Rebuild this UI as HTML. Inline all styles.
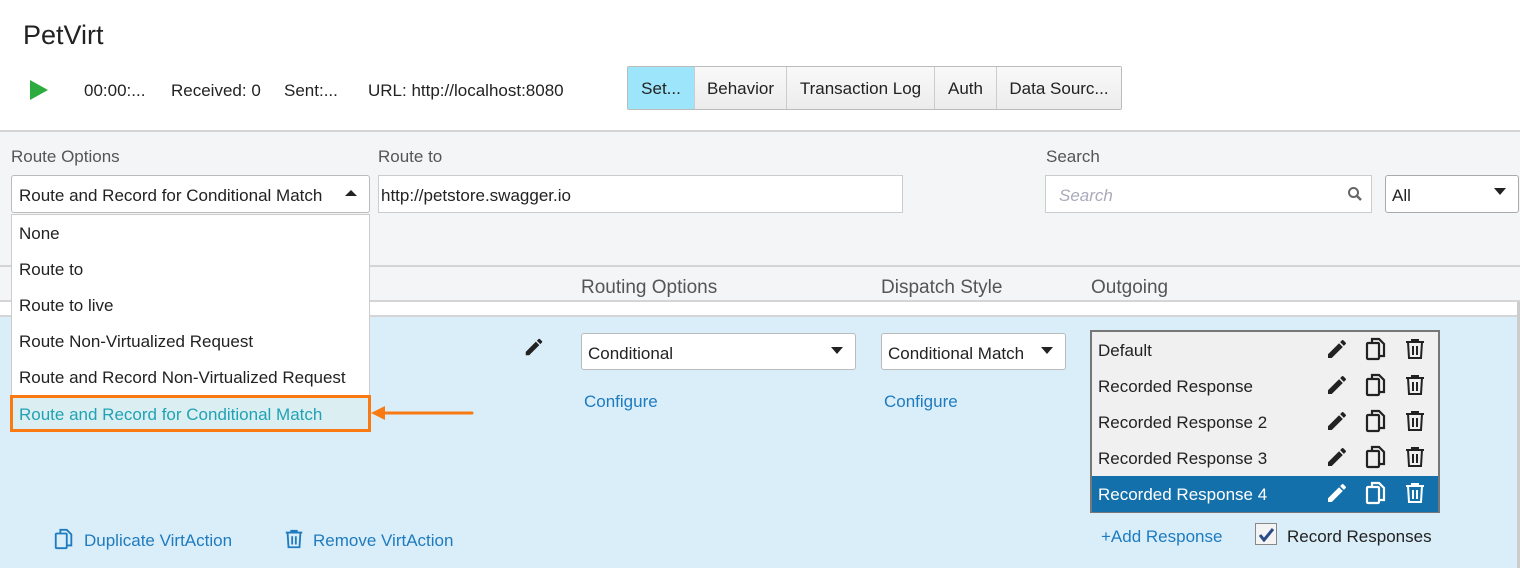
<!DOCTYPE html>
<html><head><meta charset="utf-8"><style>
*{box-sizing:border-box;margin:0;padding:0}
body{width:1520px;height:568px;overflow:hidden;background:#fff;font-family:"Liberation Sans",sans-serif;color:#222;position:relative;font-size:17px}
.a{position:absolute;white-space:nowrap}
.lbl{color:#555;font-size:17px}
.box{position:absolute;background:#fff;border:1px solid #ccc}
.tab{position:absolute;top:67px;height:42px;border-right:1px solid #ccc;line-height:44px;text-align:center;font-size:17px;background:linear-gradient(#f9f9f9,#ececec)}
.dd div{height:36px;line-height:38px;padding-left:7px}
.link{color:#1e7bbf}
.row{position:absolute;left:1092px;width:346px;height:36px;line-height:38px;padding-left:6px}
</style></head><body>
<div class="a" style="left:23px;top:20px;font-size:27px;color:#222">PetVirt</div>
<svg class="a" style="left:29px;top:79px" width="20" height="22"><polygon points="1,1 19,11 1,21" fill="#2eab3f"/></svg>
<div class="a" style="left:84px;top:81px">00:00:...</div>
<div class="a" style="left:171px;top:81px">Received: 0</div>
<div class="a" style="left:284px;top:81px">Sent:...</div>
<div class="a" style="left:368px;top:81px">URL: http://localhost:8080</div>
<div class="a" style="left:627px;top:66px;width:495px;height:44px;border:1px solid #bbb;border-radius:2px"></div>
<div class="tab" style="left:628px;width:67px;background:#9de5fa">Set...</div>
<div class="tab" style="left:695px;width:92px">Behavior</div>
<div class="tab" style="left:787px;width:148px">Transaction Log</div>
<div class="tab" style="left:935px;width:62px">Auth</div>
<div class="tab" style="left:997px;width:124px;border-right:none">Data Sourc...</div>

<div class="a" style="left:0;top:130px;width:1520px;height:137px;background:#f4f5f7;border-top:2px solid #d5d5d5;border-bottom:2px solid #d5d5d5"></div>
<div class="a" style="left:0;top:267px;width:1520px;height:35px;background:#f4f5f7;border-bottom:2px solid #d5d5d5"></div>
<div class="a" style="left:0;top:302px;width:1520px;height:15px;background:#fff;border-bottom:2px solid #d5d5d5"></div>
<div class="a" style="left:0;top:317px;width:1520px;height:251px;background:#daeef9"></div>
<div class="a" style="left:1517px;top:302px;width:3px;height:266px;background:#ccc"></div>

<div class="a lbl" style="left:11px;top:147px">Route Options</div>
<div class="a lbl" style="left:378px;top:147px">Route to</div>
<div class="a lbl" style="left:1046px;top:147px">Search</div>
<div class="box" style="left:11px;top:175px;width:359px;height:38px;border-radius:3px;border-color:#bbb"></div>
<div class="a" style="left:19px;top:186px;width:316px;overflow:hidden">Route and Record for Conditional Match</div>
<svg class="a" style="left:345px;top:189px" width="12" height="8"><polygon points="0,7 6,1 12,7" fill="#222"/></svg>
<div class="box" style="left:378px;top:175px;width:525px;height:38px"></div>
<div class="a" style="left:381px;top:186px">http://petstore.swagger.io</div>
<div class="box" style="left:1045px;top:175px;width:327px;height:38px"></div>
<div class="a" style="left:1059px;top:186px;color:#aab;font-style:italic">Search</div>
<svg class="a" style="left:1347px;top:186px" width="16" height="16"><circle cx="6.5" cy="6.5" r="4.5" stroke="#666" stroke-width="2" fill="none"/><line x1="10" y1="10" x2="14" y2="14" stroke="#666" stroke-width="2.5"/></svg>
<div class="box" style="left:1385px;top:175px;width:134px;height:38px;border-radius:3px;border-color:#aaa"></div>
<div class="a" style="left:1392px;top:186px">All</div>
<svg class="a" style="left:1494px;top:188px" width="12" height="8"><polygon points="0,0 12,0 6,7" fill="#222"/></svg>

<div class="a lbl" style="left:581px;top:277px;font-size:19px">Routing Options</div>
<div class="a lbl" style="left:881px;top:277px;font-size:19px">Dispatch Style</div>
<div class="a lbl" style="left:1091px;top:277px;font-size:19px">Outgoing</div>

<div class="box dd" style="left:11px;top:214px;width:359px;height:216px;border-color:#ccc">
<div>None</div><div>Route to</div><div>Route to live</div><div>Route Non-Virtualized Request</div><div>Route and Record Non-Virtualized Request</div>
</div>
<div class="a" style="left:10px;top:395px;width:361px;height:37px;border:3px solid #f97a12;background:#dbeff2;color:#21a2b4;line-height:33px;padding-left:6px">Route and Record for Conditional Match</div>
<svg class="a" style="left:371px;top:404px" width="104" height="18"><polygon points="0,9 14,2 14,16" fill="#f97a12"/><line x1="12" y1="9" x2="101" y2="9" stroke="#f97a12" stroke-width="3" stroke-linecap="round"/></svg>

<svg class="a" style="left:523px;top:336px" width="22" height="22" viewBox="0 0 24 24"><path d="M3 17.25V21h3.75L17.8 9.94l-3.75-3.75zM20.7 7.04a1 1 0 000-1.41l-2.34-2.34a1 1 0 00-1.41 0l-1.83 1.83 3.75 3.75z" fill="#222"/></svg>
<div class="box" style="left:581px;top:333px;width:275px;height:37px;border-radius:3px;border-color:#bbb"></div>
<div class="a" style="left:588px;top:344px">Conditional</div>
<svg class="a" style="left:831px;top:347px" width="12" height="8"><polygon points="0,0 12,0 6,7" fill="#222"/></svg>
<div class="box" style="left:881px;top:333px;width:185px;height:37px;border-radius:3px;border-color:#bbb"></div>
<div class="a" style="left:888px;top:344px;width:142px;overflow:hidden">Conditional Match</div>
<svg class="a" style="left:1041px;top:347px" width="12" height="8"><polygon points="0,0 12,0 6,7" fill="#222"/></svg>
<div class="a link" style="left:584px;top:392px">Configure</div>
<div class="a link" style="left:884px;top:392px">Configure</div>

<div class="a" style="left:1090px;top:330px;width:350px;height:183px;border:2px solid #777;background:#f0f0f0"></div>
<div class="row" style="top:332px">Default</div>
<div class="row" style="top:368px">Recorded Response</div>
<div class="row" style="top:404px">Recorded Response 2</div>
<div class="row" style="top:440px">Recorded Response 3</div>
<div class="row" style="top:476px;background:#1470aa;color:#fff">Recorded Response 4</div>

<svg width="0" height="0" style="position:absolute"><defs>
<g id="pen"><path d="M3 17.25V21h3.75L17.8 9.94l-3.75-3.75zM20.7 7.04a1 1 0 000-1.41l-2.34-2.34a1 1 0 00-1.41 0l-1.83 1.83 3.75 3.75z"/></g>
<g id="cp" fill="none" stroke-width="2.2"><path d="M8 6V2h7l5 5v12h-5"/><rect x="3" y="6" width="12" height="16" rx="1"/></g>
<g id="tr" fill="none" stroke-width="2"><path d="M3 5h18M9 5V3h6v2M5 5l1 16h12l1-16M10 9v9M14 9v9"/></g>
</defs></svg>
<div class="a" style="left:1325px;top:337px">
<svg width="24" height="180" viewBox="0 0 24 180"><g fill="#222"><use href="#pen"/><use href="#pen" y="36"/><use href="#pen" y="72"/><use href="#pen" y="108"/></g><g fill="#fff"><use href="#pen" y="144"/></g></svg></div>
<div class="a" style="left:1364px;top:337px">
<svg width="24" height="180" viewBox="0 0 24 180"><g stroke="#222"><use href="#cp"/><use href="#cp" y="36"/><use href="#cp" y="72"/><use href="#cp" y="108"/></g><g stroke="#fff"><use href="#cp" y="144"/></g></svg></div>
<div class="a" style="left:1403px;top:337px">
<svg width="24" height="180" viewBox="0 0 24 180"><g stroke="#222"><use href="#tr"/><use href="#tr" y="36"/><use href="#tr" y="72"/><use href="#tr" y="108"/></g><g stroke="#fff"><use href="#tr" y="144"/></g></svg></div>

<div class="a link" style="left:1101px;top:527px">+Add Response</div>
<div class="a" style="left:1255px;top:523px;width:22px;height:22px;border:1px solid #888;background:#f4f4f4"></div>
<svg class="a" style="left:1258px;top:527px" width="17" height="15"><path d="M2 8l4 5 9-11" stroke="#2a4a8a" stroke-width="3" fill="none"/></svg>
<div class="a" style="left:1287px;top:527px">Record Responses</div>

<svg class="a" style="left:53px;top:527px" width="22" height="24" viewBox="0 0 24 24"><g stroke="#1e7bbf" fill="none" stroke-width="2"><path d="M8 6V2h7l5 5v12h-5"/><rect x="3" y="6" width="12" height="16" rx="1"/></g></svg>
<div class="a link" style="left:84px;top:531px">Duplicate VirtAction</div>
<svg class="a" style="left:283px;top:527px" width="22" height="24" viewBox="0 0 24 24"><path d="M3 5h18M9 5V3h6v2M5 5l1 16h12l1-16M10 9v9M14 9v9" stroke="#1e7bbf" fill="none" stroke-width="2"/></svg>
<div class="a link" style="left:313px;top:531px">Remove VirtAction</div>
</body></html>
